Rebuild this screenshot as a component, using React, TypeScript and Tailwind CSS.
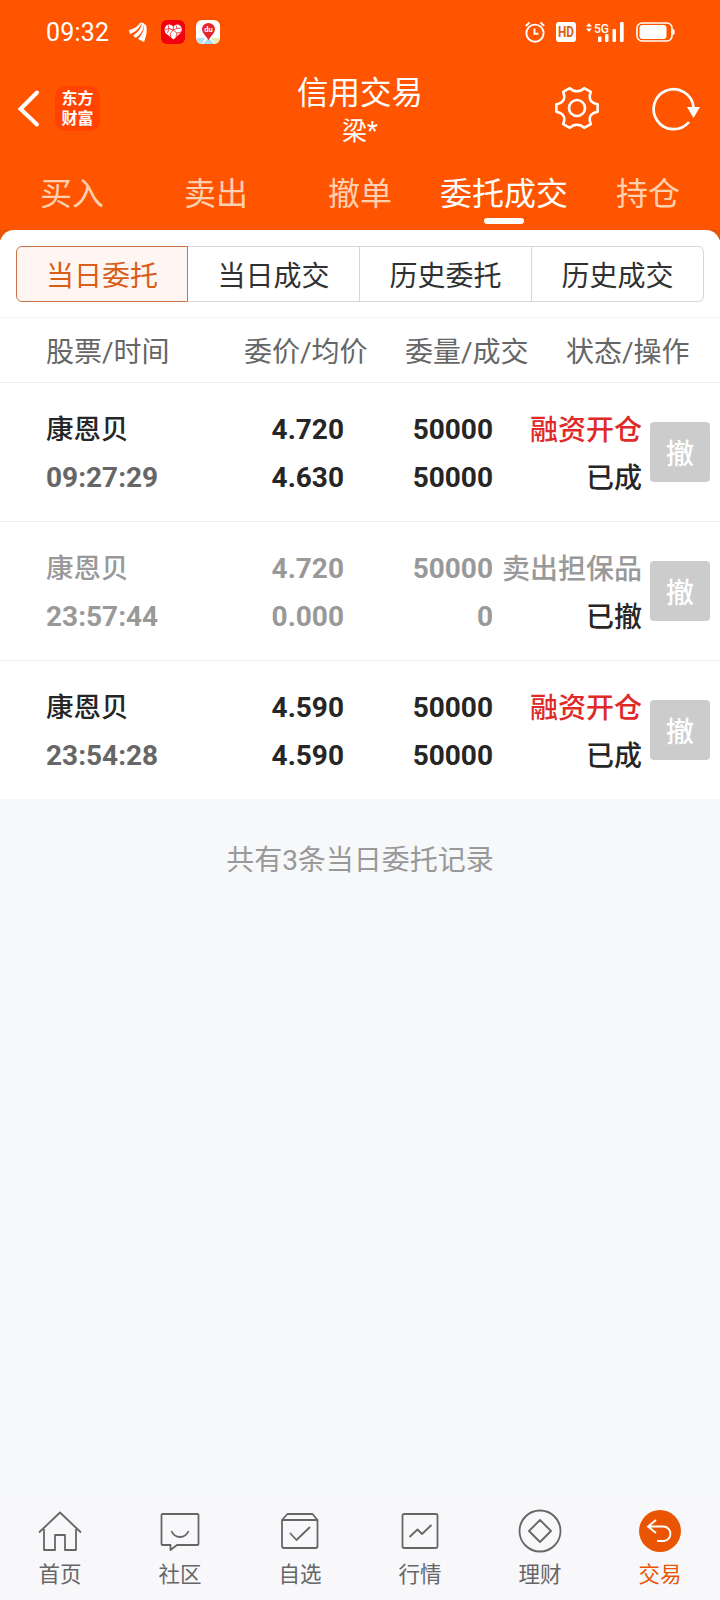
import { clsx } from "clsx";

const tabs = ["买入", "卖出", "撤单", "委托成交", "持仓"];
const segments = ["当日委托", "当日成交", "历史委托", "历史成交"];

const orders = [
  {
    id: 1,
    name: "康恩贝",
    time: "09:27:29",
    price: "4.720",
    avgPrice: "4.630",
    amount: "50000",
    filled: "50000",
    action: "融资开仓",
    status: "已成",
    cancelled: false
  },
  {
    id: 2,
    name: "康恩贝",
    time: "23:57:44",
    price: "4.720",
    avgPrice: "0.000",
    amount: "50000",
    filled: "0",
    action: "卖出担保品",
    status: "已撤",
    cancelled: true
  },
  {
    id: 3,
    name: "康恩贝",
    time: "23:54:28",
    price: "4.590",
    avgPrice: "4.590",
    amount: "50000",
    filled: "50000",
    action: "融资开仓",
    status: "已成",
    cancelled: false
  }
];

const StatusBar = () => (
  <div className="flex h-16 items-center text-white">
    <span className="ml-[46px] w-[83px] text-[25px] leading-none tracking-[0.2px]">09:32</span>
    <svg className="h-5 w-[18px]" viewBox="0 0 18 20" fill="currentColor">
      <path d="M0 8C5 7 8.500 4.500 11 1L13 0.500C11 5 7 10 1 12Z" />
      <path d="M4 13.500C9 10.500 12 6.500 13 0.500L15 1.500C15 7.500 11.500 13 6.500 16Z" />
      <path d="M9 17C13 12.500 15.500 8 15 2L17 3C18.500 8 17.500 14 15 20Z" />
    </svg>
    <svg className="ml-[14px] h-6 w-6" viewBox="0 0 24 24">
      <rect width="24" height="24" rx="6" fill="#f2000d" />
      <path d="M12.500 19.500L4.500 13C2.500 9 4.500 4.500 8 4.500C10 4.500 11.500 5.500 12.500 7C13.500 5 15.500 4 18 5C21.500 6.500 21.500 10 19.500 13Z" fill="#fff" />
      <path d="M4 9.500L8 8.500M7 5L8 8.500L6.500 13M8 8.500L12 10M12.500 7L12 10L9 14L10 17M12 10L16 13L15 17M16 13L20 12M15 5.500L16 8.500L20.500 8M16 8.500L12 10" fill="none" stroke="#f2000d" strokeWidth="0.700" />
    </svg>
    <svg className="ml-[11px] h-6 w-6" viewBox="0 0 24 24">
      <rect width="24" height="24" rx="6" fill="#fff" />
      <path d="M1 18H9L6 24Q1 24 1 19Z" fill="#b5e2f2" />
      <path d="M15 18H23V20Q22 23 19 24Z" fill="#e0edb1" />
      <path d="M12.500 18L18 24H7Z" fill="#a9d9f1" />
      <path d="M12.500 20C10 16 6 13 6 9A6.500 6 0 0 1 19 9C19 13 15 16 12.500 20Z" fill="#e5262d" />
      <text x="12.500" y="12" fill="#fff" fontSize="7.500" fontWeight="700" textAnchor="middle" fontFamily="Roboto">du</text>
    </svg>

    <svg className="ml-auto h-[22px] w-5" viewBox="0 0 20 22" fill="none" stroke="currentColor" strokeWidth="1.900">
      <circle cx="10" cy="12.200" r="8.600" />
      <path d="M9.500 7.500V12.800H13.500M0.800 5L4.500 1.500M19.200 5L15.500 1.500" />
    </svg>
    <svg className="ml-[11px] h-5 w-5 overflow-visible rounded-[3px] bg-white text-[#d9600f]" viewBox="0 0 20 20" fill="currentColor">
      <text x="2" y="15.200" fontSize="15" fontWeight="700" fontFamily="Roboto" textLength="16" lengthAdjust="spacingAndGlyphs">HD</text>
    </svg>
    <svg className="ml-[10px] h-[22px] w-[38px]" viewBox="0 0 38 22" fill="currentColor">
      <path d="M0 5.500L3 2L6 5.500ZM0 7.500L3 11L6 7.500Z" />
      <text x="8" y="11.500" fontSize="13.500" fontWeight="500" fontFamily="Roboto" textLength="15" lengthAdjust="spacingAndGlyphs">5G</text>
      <rect x="12" y="15.500" width="3.500" height="5.500" rx="1" />
      <rect x="19" y="13" width="3.500" height="8" rx="1" />
      <rect x="26.500" y="8" width="3.500" height="13" rx="1" />
      <rect x="34" y="1" width="3.700" height="20" rx="1" />
    </svg>
    <svg className="ml-[12px] mr-[45px] h-5 w-[39px]" viewBox="0 0 39 20" fill="none">
      <rect x="1" y="1" width="35" height="18" rx="5" stroke="currentColor" strokeWidth="1.600" />
      <rect x="3.500" y="3" width="27" height="14" rx="3" fill="currentColor" />
      <path d="M36.500 6.500Q38.800 7 38.800 10Q38.800 13 36.500 13.500Z" fill="currentColor" />
    </svg>
  </div>
);

const TitleBar = () => (
  <div className="grid h-[96px] grid-cols-3 text-white">
    <div className="flex items-start pt-[22px]">
      <svg className="ml-4 mt-[3px] h-10 w-6" viewBox="0 0 24 40" fill="none" stroke="currentColor" strokeWidth="4" strokeLinecap="round">
        <path d="M21 3.500L4.500 20L21 35.500" />
      </svg>
      <p className="ml-[15px] h-[45px] w-[45px] rounded-[10px] bg-[#ff4401] pt-0.5 text-center font-['Noto_Sans_CJK_SC',sans-serif] text-base font-bold leading-[19.5px]">
        东方
        <br />
        财富
      </p>
    </div>
    <div className="flex flex-col items-center pt-2.5">
      <h1 className="text-[31.5px] leading-10">信用交易</h1>
      <span className="pt-0.5 text-[25px] leading-8">梁*</span>
    </div>
    <div className="flex items-start justify-end pt-5">
      <svg className="h-12 w-12" viewBox="0 0 48 48" fill="none" stroke="currentColor" strokeWidth="2.600" strokeLinejoin="round">
        <path d="M44.600 20.200V27.800C36.500 29.500 35.500 34 37.800 40.200L31.200 43.800C27 39.800 21 39.800 16.800 43.800L10.200 40.200C12.500 34 11.500 29.500 3.400 27.800V20.200C11.500 18.500 12.500 14 10.200 7.800L16.800 4.200C21 8.200 27 8.200 31.200 4.200L37.800 7.800C35.500 14 36.500 18.500 44.600 20.200Z" />
        <circle cx="24" cy="24" r="8" />
      </svg>
      <svg className="ml-[49px] mr-[18px] h-12 w-[52px]" viewBox="0 0 52 48" fill="none" stroke="currentColor" strokeWidth="2.700">
        <path d="M43.500 23A20 20 0 1 0 39 38" />
        <path d="M37 23H50L43.500 34Z" fill="currentColor" stroke="none" />
      </svg>
    </div>
  </div>
);

const Tabs = () => (
  <nav className="grid h-[70px] grid-cols-5 text-[32px] leading-10">
    {tabs.map((tab) => (
      <div
        key={tab}
        className={clsx("flex flex-col items-center pt-3.5", tab === "委托成交" ? "text-white" : "text-[#ffd0b0]")}
      >
        <span>{tab}</span>
        {tab === "委托成交" && <span className="mt-1 h-1.5 w-10 rounded-sm bg-white" />}
      </div>
    ))}
  </nav>
);

const Segments = () => (
  <div className="flex h-[88px] border-b border-[#f3f4f5] px-4 pt-4">
    {segments.map((label, i) => (
      <button
        key={label}
        className={clsx(
          "h-14 w-[172px] border pt-[5px] text-[28px]",
          i === 0
            ? "rounded-l-md border-[#c77445] bg-[#fff6f3] text-[#d95d16]"
            : "border-l-0 border-[#d5d8d9] text-[#303133]",
          i === segments.length - 1 && "rounded-r-md"
        )}
      >
        {label}
      </button>
    ))}
  </div>
);

const OrderRow = ({ order }: { order: (typeof orders)[number] }) => (
  <div
    className={clsx(
      "flex h-[139px] items-center border-t border-[#eaebec] pl-[46px] pr-2.5 text-[28px] font-medium leading-[48px]",
      order.cancelled ? "text-[#999]" : "text-[#262626]"
    )}
  >
    <div className="w-[150px] pt-[4px]">
      <p className="text-[27.5px]">{order.name}</p>
      <p className={clsx("font-bold", !order.cancelled && "text-[#666]")}>{order.time}</p>
    </div>
    <div className="w-[148px] pt-[3px] text-right font-bold">
      <p>{order.price}</p>
      <p>{order.avgPrice}</p>
    </div>
    <div className="w-[149px] pt-[3px] text-right font-bold">
      <p>{order.amount}</p>
      <p>{order.filled}</p>
    </div>
    <div className="w-[149px] whitespace-nowrap pt-[5px] text-right text-[28px]">
      <p className={clsx(!order.cancelled && "text-[#e02929]")}>{order.action}</p>
      <p className="text-[#262626]">{order.status}</p>
    </div>
    <button className="ml-auto h-[60px] w-[60px] rounded bg-[#ccc] pt-[5px] text-[28px] leading-none text-white">撤</button>
  </div>
);

const navItems = [
  {
    label: "首页",
    icon: (
      <>
        <path d="M3 23.500L24 3.500L45 23.500" />
        <path d="M8 20V41H19V26H29V41H40V20" />
      </>
    )
  },
  {
    label: "社区",
    icon: (
      <>
        <path d="M6.500 5H41.500Q42.500 5 42.500 6V35Q42.500 36 41.500 36H21L14.500 41V36H6.500Q5.500 36 5.500 35V6Q5.500 5 6.500 5Z" />
        <path d="M15.500 22Q18 28 24 28Q30 28 32.500 22" />
      </>
    )
  },
  {
    label: "自选",
    icon: (
      <>
        <path d="M6 11L11.500 5H36.500L41.500 11V37Q41.500 39 39.500 39H8Q6 39 6 37ZM6 11H41.500" />
        <path d="M14 24L20.500 31L34 18" />
      </>
    )
  },
  {
    label: "行情",
    icon: (
      <>
        <rect x="6.500" y="5" width="35" height="34" rx="1.500" />
        <path d="M13.500 28L21.500 20.500L26 25L35.500 16" />
      </>
    )
  },
  {
    label: "理财",
    icon: (
      <>
        <circle cx="24" cy="22" r="20.500" />
        <path d="M24 11L35 22L24 33L13 22Z" />
      </>
    )
  }
];

const BottomNav = () => (
  <nav className="grid h-[101px] grid-cols-6 bg-[#f8f8fb] pt-[10px] text-[21.5px] leading-8 text-[#666]">
    {navItems.map((item) => (
      <div key={item.label} className="flex flex-col items-center">
        <svg className="h-12 w-12" viewBox="0 0 48 48" fill="none" stroke="currentColor" strokeWidth="1.800" strokeLinejoin="round">
          {item.icon}
        </svg>
        <span className="pt-0.5">{item.label}</span>
      </div>
    ))}
    <div className="flex flex-col items-center text-[#e95503]">
      <svg className="h-12 w-12" viewBox="0 0 48 48" fill="none">
        <circle cx="24" cy="22" r="21" fill="#e95503" />
        <path d="M20 11L12 17.500L20 24M12.500 17.500H28A7.300 7.300 0 0 1 28 32H21" stroke="#fff" strokeWidth="1.900" />
      </svg>
      <span className="pt-0.5">交易</span>
    </div>
  </nav>
);

export default function App() {
  return (
    <div className="flex h-[1600px] w-[720px] flex-col overflow-hidden bg-[#f7f8fa] font-[Roboto,'Noto_Sans_CJK_SC',sans-serif]">
      <header className="bg-[#ff5500]">
        <StatusBar />
        <TitleBar />
        <Tabs />
      </header>
      <div className="bg-linear-to-b from-[#e75408] from-[10px] to-white to-[10px]">
        <main className="rounded-t-[14px] bg-white">
          <Segments />
          <div className="flex h-16 items-center whitespace-nowrap pl-[46px] pt-[5px] text-[28px] text-[#666]">
            <span className="w-[198px]">股票/时间</span>
            <span className="w-[161px]">委价/均价</span>
            <span className="w-[161px]">委量/成交</span>
            <span>状态/操作</span>
          </div>
          {orders.map((order) => (
            <OrderRow key={order.id} order={order} />
          ))}
        </main>
      </div>
      <p className="flex-1 pt-[42px] text-center text-[28px] leading-10 text-[#999]">共有3条当日委托记录</p>
      <BottomNav />
    </div>
  );
}
